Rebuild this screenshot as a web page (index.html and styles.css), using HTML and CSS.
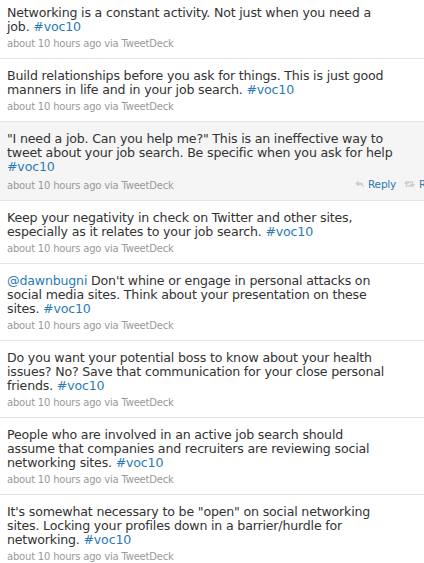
FILE: index.html
```html
<!DOCTYPE html>
<html>
<head>
<meta charset="utf-8">
<link rel="stylesheet" href="styles.css">
</head>
<body>
<ol class="timeline">
  <li class="tweet">
    <p class="text">Networking is a constant activity. Not just when you need a<br>job. <a class="tag">#voc10</a></p>
    <div class="meta-row"><span class="meta">about 10 hours ago via TweetDeck</span></div>
  </li>
  <li class="tweet">
    <p class="text">Build relationships before you ask for things. This is just good<br>manners in life and in your job search. <a class="tag">#voc10</a></p>
    <div class="meta-row"><span class="meta">about 10 hours ago via TweetDeck</span></div>
  </li>
  <li class="tweet hover">
    <p class="text">"I need a job. Can you help me?" This is an ineffective way to<br>tweet about your job search. Be specific when you ask for help<br><a class="tag">#voc10</a></p>
    <div class="meta-row">
      <span class="meta">about 10 hours ago via TweetDeck</span>
      <span class="actions">
        <span class="action">
          <svg class="ico" width="9" height="9" viewBox="0 0 9 9"><path d="M0.2 3.6 L3.6 0.4 V2.4 H5 C7.6 2.4 8.8 4.4 8.8 8.6 C8 6.2 6.9 5 5 5 H3.6 V6.8 Z" fill="#cfcfcf"/></svg>
          <a class="act-link">Reply</a>
        </span>
        <span class="action">
          <svg class="ico" width="11" height="8" viewBox="0 0 11 8"><path d="M2.5 7 V2 H7.5 M0.5 4 L2.5 1.5 L4.5 4 M8.5 1 V6 H3.5 M6.5 4 L8.5 6.5 L10.5 4" fill="none" stroke="#cfcfcf" stroke-width="1.3"/></svg>
          <a class="act-link">Retweet</a>
        </span>
      </span>
    </div>
  </li>
  <li class="tweet">
    <p class="text">Keep your negativity in check on Twitter and other sites,<br>especially as it relates to your job search. <a class="tag">#voc10</a></p>
    <div class="meta-row"><span class="meta">about 10 hours ago via TweetDeck</span></div>
  </li>
  <li class="tweet">
    <p class="text"><a class="tag">@dawnbugni</a> Don't whine or engage in personal attacks on<br>social media sites. Think about your presentation on these<br>sites. <a class="tag">#voc10</a></p>
    <div class="meta-row"><span class="meta">about 10 hours ago via TweetDeck</span></div>
  </li>
  <li class="tweet">
    <p class="text">Do you want your potential boss to know about your health<br>issues? No? Save that communication for your close personal<br>friends. <a class="tag">#voc10</a></p>
    <div class="meta-row"><span class="meta">about 10 hours ago via TweetDeck</span></div>
  </li>
  <li class="tweet">
    <p class="text">People who are involved in an active job search should<br>assume that companies and recruiters are reviewing social<br>networking sites. <a class="tag">#voc10</a></p>
    <div class="meta-row"><span class="meta">about 10 hours ago via TweetDeck</span></div>
  </li>
  <li class="tweet">
    <p class="text">It's somewhat necessary to be "open" on social networking<br>sites. Locking your profiles down in a barrier/hurdle for<br>networking. <a class="tag">#voc10</a></p>
    <div class="meta-row"><span class="meta">about 10 hours ago via TweetDeck</span></div>
  </li>
</ol>
</body>
</html>
```
FILE: styles.css
```css
html, body {
  margin: 0;
  padding: 0;
  overflow: hidden;
  background: #fff;
}
body {
  font-family: "DejaVu Sans", "Liberation Sans", sans-serif;
  color: #333;
}
.timeline {
  list-style: none;
  margin: -4px 0 0 0;
  padding: 0;
}
.tweet {
  padding: 10px 0 7px 7px;
  border-bottom: 1px solid #e4e4e4;
}
.tweet.hover {
  background: #f5f5f5;
}
.text {
  margin: 0;
  font-size: 12.6px;
  line-height: 14px;
  letter-spacing: -0.18px;
  white-space: nowrap;
}
.tag {
  color: #2a7ab4;
  text-decoration: none;
}
.meta-row {
  display: flex;
  align-items: baseline;
  margin-top: 3px;
  line-height: 14px;
}
.meta {
  flex: 1;
  font-size: 10px;
  letter-spacing: -0.2px;
  color: #999;
}
.actions {
  flex: none;
  width: 69px;
  display: flex;
  gap: 8px;
  white-space: nowrap;
  font-size: 10.5px;
  letter-spacing: -0.2px;
}
.action {
  display: flex;
  align-items: center;
  gap: 4px;
}
.act-link {
  color: #2a7ab4;
}
.ico {
  display: block;
}
```
